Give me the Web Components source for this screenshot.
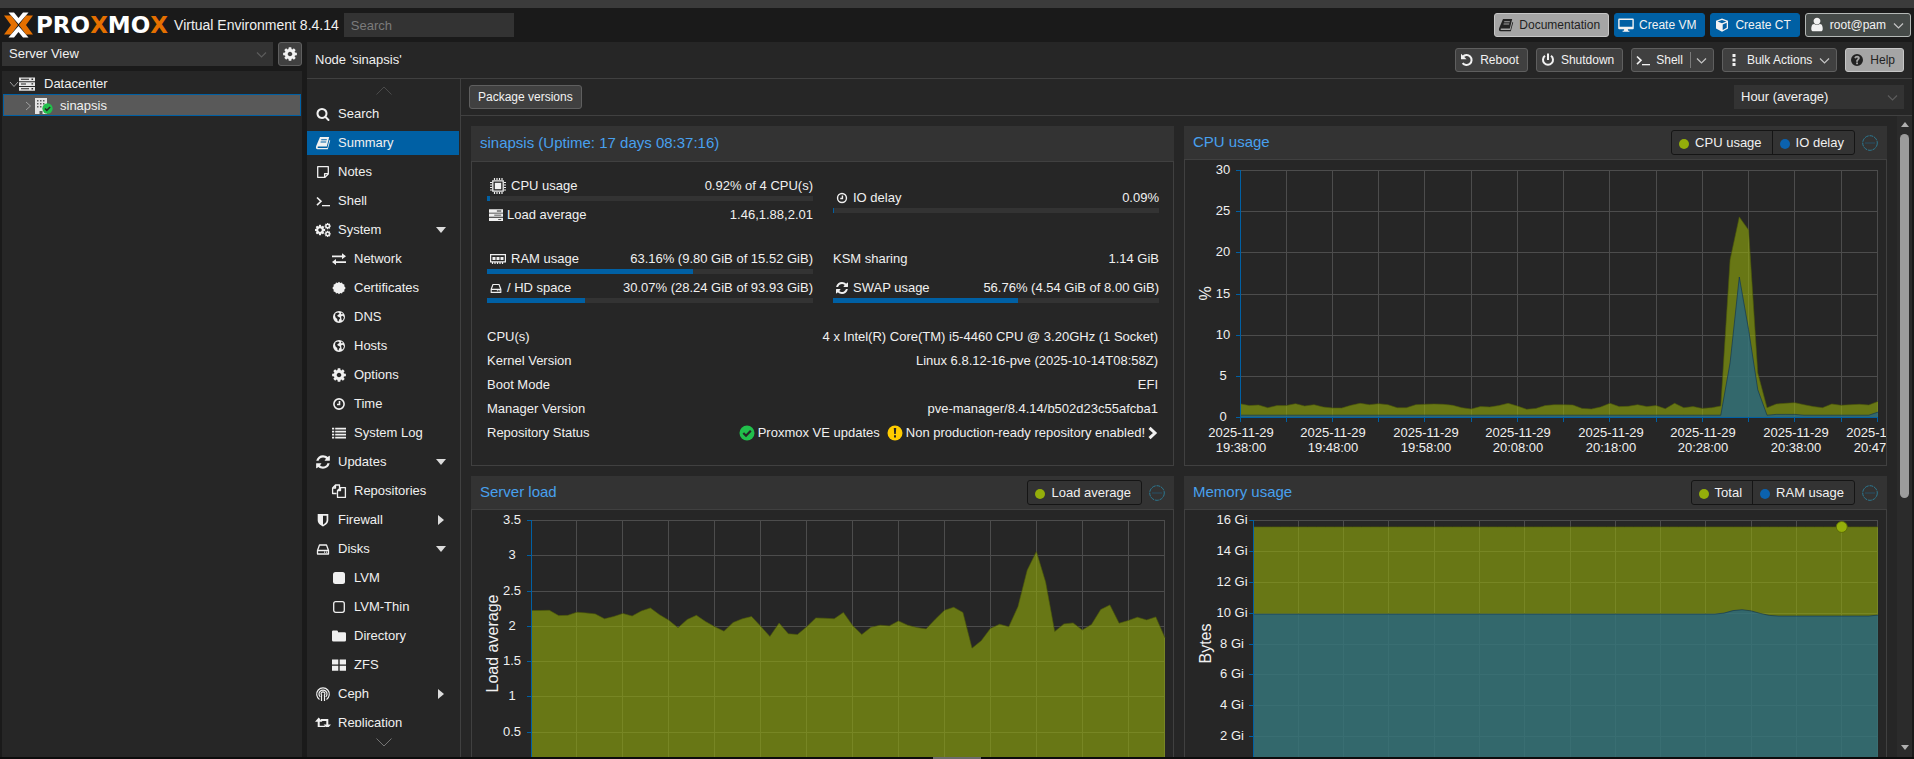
<!DOCTYPE html>
<html lang="en">
<head>
<meta charset="utf-8">
<title>sinapsis - Proxmox Virtual Environment</title>
<style>
  html, body { height: 100%; margin: 0; }
  body {
    background: #1a1a1a; color: #f0f0f0; overflow: hidden;
    font: 13px/16px "Liberation Sans", Arial, sans-serif;
  }
</style>
</head>
<body>
<pve-app></pve-app>

<script>
/* ---------- icons ---------- */
const line = (d, w = 2, extra = "") => `<path d="${d}" fill="none" stroke="currentColor" stroke-width="${w}" ${extra}/>`;
const fill = (d) => `<path d="${d}" fill="currentColor" fill-rule="evenodd"/>`;
const fa = (d) => `<g transform="scale(.00893)">${fill(d)}</g>`;
const COG = "M1152 896q0-106-75-181t-181-75-181 75-75 181 75 181 181 75 181-75 75-181zm512-109v222q0 12-8 23t-20 13l-185 28q-19 54-39 91 35 50 107 138 10 12 10 25t-9 23q-27 37-99 108t-94 71q-12 0-26-9l-138-108q-44 23-91 38-16 136-29 186-7 28-36 28h-222q-14 0-24.5-8.5t-11.5-21.5l-28-184q-49-16-90-37l-141 107q-10 9-25 9-14 0-25-11-126-114-165-168-7-10-7-23 0-12 8-23 15-21 51-66.5t54-70.5q-27-50-41-99l-183-27q-13-2-21-12.5t-8-23.5v-222q0-12 8-23t19-13l186-28q14-46 39-92-40-57-107-138-10-12-10-24 0-10 9-23 26-36 98.5-107.5t94.5-71.5q13 0 26 10l138 107q44-23 91-38 16-136 29-186 7-28 36-28h222q14 0 24.5 8.5t11.5 21.5l28 184q49 16 90 37l142-107q9-9 24-9 13 0 25 10 129 119 165 170 7 8 7 22 0 12-8 23-15 21-51 66.5t-54 70.5q26 50 41 98l183 28q13 2 21 12.5t8 23.5z";
const GLOBE = fill("M8 2a6 6 0 1 0 0 12A6 6 0 0 0 8 2zM4.6 4.2L7 3.4l1.6.8-1 1.4-1.4.8.6 1.2 1.8.6.6 1.4-1.2 1.2-.4 1.8-1-.6-.4-2-1.6-1.4-.6-2.2zM10 7.4l1.8-.6 1.2 1.4-1 2.8-1.2.4-.4-1.8zM10.4 3.6l1.4 1-.8.8-1-.6z");
const HDD = line("M2.5 9.5L4.5 4h7l2 5.5v3.5h-11zM2.5 9.5h11", 1.3, 'stroke-linejoin="round"') + fill("M9 10.6h1.2v1.2H9zM11 10.6h1.2v1.2H11z");
const BOOK = fill("M5 2h9.2L11.8 11.6H3.2c-.9 0-.8 1.5 0 1.5h9.2l2-8.1.8.6-2.4 8.6H2.6C1 14.200.6 12.700 1.200 11zM6.300 4.300l-.2.9h5.600l.2-.9zM5.700 6.500l-.2.9h5.600l.2-.9z");
const ICONS = {
  search: `<g transform="translate(1 1) scale(.00781)">${fill("M1216 832q0-185-131.5-316.5t-316.5-131.5-316.5 131.5-131.5 316.5 131.5 316.5 316.5 131.5 316.5-131.5 131.5-316.5zm512 832q0 52-38 90t-90 38q-54 0-90-38l-343-342q-179 124-399 124-143 0-273.5-55.5t-225-150-150-225-55.5-273.5 55.5-273.5 150-225 225-150 273.5-55.5 273.5 55.5 225 150 150 225 55.5 273.5q0 220-124 399l343 343q37 37 37 90z")}</g>`,
  cog: fa(COG),
  cogs: `<g transform="translate(-1 2) scale(.0067)">${fill(COG)}</g><g transform="translate(9 .4) scale(.0041)">${fill(COG)}</g><g transform="translate(9 8.200) scale(.0041)">${fill(COG)}</g>`,
  refresh: fa("M1639 1056q0 5-1 7-64 268-268 434.5t-478 166.5q-146 0-282.5-55t-243.5-157l-129 129q-19 19-45 19t-45-19-19-45v-448q0-26 19-45t45-19h448q26 0 45 19t19 45-19 45l-137 137q71 66 161 102t187 36q134 0 250-65t186-179q11-17 53-117 8-23 30-23h192q13 0 22.5 9.5t9.5 22.5zm25-800v448q0 26-19 45t-45 19h-448q-26 0-45-19t-19-45 19-45l138-138q-148-137-349-137-134 0-250 65t-186 179q-11 17-53 117-8 23-30 23h-199q-13 0-22.5-9.5t-9.5-22.5v-7q65-268 270-434.5t480-166.5q146 0 284 55.5t245 156.5l130-129q19-19 45-19t45 19 19 45z"),
  user: `<g transform="translate(0 -.5) scale(.00893)">${fill("M1536 1399q0 109-62.500 187t-150.500 78h-854q-88 0-150.500-78t-62.500-187q0-85 8.500-160.500t31.500-152 58.500-131 94-89 134.500-34.500q131 128 313 128t313-128q76 0 134.500 34.500t94 89 58.500 131 31.500 152 8.500 160.500zm-256-887q0 159-112.500 271.500t-271.500 112.500-271.500-112.500-112.500-271.500 112.500-271.500 271.500-112.500 271.500 112.500 112.500 271.500z")}</g>`,
  clock: line("M8 2.900a5.100 5.100 0 1 0 0 10.200A5.100 5.100 0 0 0 8 2.900zM8.500 5v3.500H6", 1.600),
  book: BOOK,
  note: line("M2.700 2.700h10.600v7.300l-3.300 3.300H2.700zM13.300 9.600H9.600v3.700", 1.300, 'stroke-linejoin="round"'),
  terminal: line("M2 4.500l4 3.800-4 3.800", 1.600) + fill("M7 12h8v1.300H7z"),
  exchange: fill("M1 4.500h10V2.200l4 3-4 3V6.200H1zM15 10.200H5V8l-4 3.100 4 3V12h10z"),
  certificate: fill("M8 1.700l1.300 1.200 1.700-.5.7 1.600 1.700.4-.1 1.800 1.400 1.800-1.400 1.700.1 1.800-1.700.4-.7 1.700-1.700-.5L8 14.300l-1.300-1.200-1.700.5-.7-1.700-1.700-.4.1-1.800L1.300 8l1.400-1.800-.1-1.800 1.700-.4.7-1.600 1.700.5z"),
  globe: GLOBE,
  list: fill("M1 2.700h2.200v1.900H1zM4.200 2.700H15v1.900H4.200zM1 5.700h2.200v1.900H1zM4.200 5.700H15v1.900H4.200zM1 8.700h2.200v1.900H1zM4.200 8.700H15v1.900H4.200zM1 11.700h2.200v1.900H1zM4.200 11.700H15v1.900H4.200z"),
  files: line("M5.500 10.500H1.600V5L4.500 2h4v3M4.500 2v3H1.600M6.500 7.500L9.500 4.600h4.900v9.800H6.500zM9.500 4.600v3h-3", 1.300, 'stroke-linejoin="round"'),
  shield: fill("M2.700 2h10.600v6.300c0 3-2.600 4.900-5.300 6.200-2.700-1.300-5.300-3.200-5.300-6.200zM8 3.700v9c2-1.100 3.600-2.500 3.600-4.600V3.700z"),
  hdd: HDD,
  square: `<rect x="2" y="2" width="12" height="12" rx="2.500" fill="currentColor"/>`,
  "square-o": `<rect x="2.700" y="2.700" width="10.600" height="10.600" rx="2" fill="none" stroke="currentColor" stroke-width="1.300"/>`,
  folder: fill("M1 3.600Q1 2.500 2.200 2.500h3.600Q7 2.500 7 3.800v.5h6.500q1.500 0 1.500 1.300v6.600q0 1.300-1.500 1.300h-11Q1 13.500 1 12.200z"),
  grid: fill("M1 2.500h6.300v5H1zM8.700 2.500H15v5H8.700zM1 8.700h6.300v5H1zM8.700 8.700H15v5H8.700z"),
  ceph: line("M4.500 13.400A6.300 6.300 0 1 1 11.500 13.400M5.200 10.900A4 4 0 1 1 10.800 10.900M7.200 9.500A1.900 1.900 0 1 1 8.800 9.500M6.500 9.500v5.500M9.500 9.500v5.500", 1.200),
  retweet: line("M3.700 6v5.700h6.500M12.300 10.500V5H6", 2) + fill("M3.700 2.500l3.700 4.300H0zM12.300 13.700L8.600 9.400H16z"),
  undo: line("M3.800 4.800A5 5 0 1 1 3.600 11.100", 2) + fill("M2 1.700v5.600h5.600z"),
  power: line("M5 3.800a5 5 0 1 0 6 0M8 1.500v6.500", 2),
  ellipsis: fill("M6.500 2h3v3h-3zM6.500 6.500h3v3h-3zM6.500 11h3v3h-3z"),
  help: fill("M8 2a6 6 0 1 0 0 12A6 6 0 0 0 8 2zM7.100 10.600h1.900v1.700H7.100zM5.300 6C5.700 4.500 6.700 3.800 8.100 3.800c1.500 0 2.700.9 2.700 2.200 0 1.700-1.800 1.900-1.800 3.300v.4H7.100v-.5c0-1.700 1.600-2 1.600-3 0-.9-1.400-.9-1.700.3z"),
  desktop: fill("M1.200 1.500h13.600q1 0 1 1v8.700q0 1-1 1h-5l.4 1.500h1.200v1H4.600v-1h1.200l.4-1.500h-5q-1 0-1-1V2.500q0-1 1-1zM1.600 2.900v6.900h12.800V2.900z"),
  cube: fill("M8 1.500l6 2.300v7.600L8 14.700 2 11.400V3.800zM8 2.900L3.600 4.500 8 6.200l4.400-1.700zM8.700 7.400v5.500l4-2.200V5.800z"),
  down: line("M4 6.500l4.500 4.500L13 6.500", 1.200),
  server: fill("M0 1.500h16v3.700H0zM0 6.200h16v3.700H0zM0 11h16v3.700H0zM2 2.800v1h8v-1zM2 7.500v1h5v-1zM2 12.300v1h8v-1zM12.500 2.600v1.300h1.600V2.600zM12.500 7.300v1.300h1.600V7.300zM12.500 12.100v1.300h1.600v-1.300z"),
  load: fill("M0 1.500h16v3.800H0zM0 6.300h16v3.800H0zM0 11.100h16v3.800H0zM9 2.900v1h5v-1zM6 7.700v1h8v-1zM10.500 12.500v1h3.500v-1z"),
  building: fill("M2 0h12v16H9.500v-3h-3v3H2zM4 2v1.500h1.500V2zM7 2v1.500h1.500V2zM10 2v1.500h1.500V2zM4 5v1.500h1.500V5zM7 5v1.500h1.500V5zM10 5v1.500h1.500V5zM4 8v1.500h1.500V8zM7 8v1.500h1.500V8zM10 8v1.500h1.500V8z"),
  ok: `<circle cx="8" cy="8" r="7.500" fill="#21bf4b"/><path d="M4.300 8l2.700 2.700 4.800-5" fill="none" stroke="#262626" stroke-width="2.200"/>`,
  warn: `<circle cx="8" cy="8" r="7.500" fill="#fc0"/><path d="M6.800 3h2.400l-.4 6H7.200zM7 10.300h2v2.300H7z" fill="#262626"/>`,
  next: line("M4.500 2.800L10 8l-5.500 5.200", 3),
  cpu: line("M2.800 2.800h10.400v10.400H2.800z", 1.300) + fill("M4.800 4.800h6.400v6.400H4.800z") + line("M4.500 0v2M7 0v2M9.500 0v2M12 0v2M4.500 14v2M7 14v2M9.500 14v2M12 14v2M0 4.500h2M0 7h2M0 9.500h2M0 12h2M14 4.500h2M14 7h2M14 9.500h2M14 12h2", 1.200),
  ram: line("M.6 3.600h14.800v7.300H.6z", 1.200) + fill("M2.500 6h3v3h-3zM6.500 6h3v3h-3zM10.500 6h3v3h-3z") + line("M2.500 11v2M5 11v2M7.500 11v2M10 11v2M12.500 11v2", 1.200),
  collapse: `<circle cx="8" cy="8" r="7.300" fill="none" stroke="#2c7891" stroke-dasharray="4 .8"/><path d="M3 8h10" stroke="#275066"/>`
};

/* ---------- base ---------- */
class PveElement extends HTMLElement {
  connectedCallback() {
    if (this.shadowRoot) return;
    const root = this.attachShadow({ mode: "open" });
    root.innerHTML = `<style>*{box-sizing:border-box}${this.css()}</style>${this.html()}`;
    this.ready(root);
  }
  attr(name, fallback = "") { return this.getAttribute(name) ?? fallback; }
  css() { return ""; }
  html() { return "<slot></slot>"; }
  ready() {}
}

class PveIcon extends PveElement {
  css() { return `:host{display:block;width:16px;height:16px;flex:none}svg{display:block;width:100%;height:100%}`; }
  html() { return `<svg viewBox="0 0 16 16" aria-hidden="true">${ICONS[this.attr("name")] || ""}</svg>`; }
}

class PveButton extends PveElement {
  css() { return `
    :host{display:block;flex:none}
    button{display:flex;align-items:center;height:24px;padding:0 8px;border:1px solid #5f5f5f;border-radius:3px;
      background:#404040;color:#f2f2f2;font:12px/16px "Liberation Sans",Arial,sans-serif;white-space:nowrap;cursor:pointer}
    .lead{margin:0 5px 0 -5px}
    :host([menu]) button{padding-right:4px}
    .arrow{margin-left:4px;color:#c4c4c4}
    .split{width:1px;height:16px;margin:0 -2px 0 7px;background:#7a7a7a}
    :host([kind=primary]) button{background:#0060a4;border-color:#0060a4}
    :host([kind=light]) button{background:#a5a5a5;border-color:#c6c6c6;color:#222}
    :host([kind=user]) button{background:#454a48;border-color:#b4b8b6}
    :host([kind=square]) button{width:24px;padding:0 3px}
    :host([kind=square]) .lead{margin:0}`; }
  html() {
    const icon = this.attr("icon");
    const label = this.attr("label");
    return `<button type="button"${label ? ` aria-label="${label}"` : ""}>
      ${icon ? `<pve-icon class="lead" name="${icon}"></pve-icon>` : ""}<slot></slot>
      ${this.hasAttribute("split") ? `<span class="split"></span>` : ""}
      ${this.hasAttribute("menu") ? `<pve-icon class="arrow" name="down"></pve-icon>` : ""}</button>`;
  }
}

class PveCombo extends PveElement {
  css() { return `
    :host{display:grid;align-items:center;height:24px;background:#333}
    select,pve-icon{grid-area:1/1}
    select{appearance:none;width:100%;height:24px;padding:0 7px;border:0;border-radius:0;background:none;color:#f0f0f0;
      font:13px/16px "Liberation Sans",Arial,sans-serif}
    pve-icon{justify-self:end;margin-right:4px;color:#5c5c5c;pointer-events:none}`; }
  html() { return `<select aria-label="${this.attr("label")}"><option>${this.attr("value")}</option></select><pve-icon name="down"></pve-icon>`; }
}

class PveLogo extends PveElement {
  css() { return `
    :host{display:flex;align-items:center;height:24px;gap:3px}
    svg{width:29px;height:26px;flex:none}
    .word{font:bold 23px/24px "DejaVu Sans",sans-serif;color:#fff}
    b{color:#e57000}`; }
  html() { return `<svg viewBox="0 0 29 26" aria-hidden="true">
      <path d="M0 3.500h7L14 13l-7 9.500H0L7 13zM29 3.500h-7L15 13l7 9.500h7L22 13z" fill="#e57000"/>
      <path d="M4.500.5H10l4.500 5.500L19 .5h5.500l-10 11.500zM4.500 25.500H10l4.500-5.500 4.500 5.500h5.500l-10-11.500z" fill="#fff"/></svg>
    <span class="word">PRO<b>X</b>MO<b>X</b></span>`; }
}

class PveHeader extends PveElement {
  css() { return `
    :host{display:flex;align-items:center;height:42px;padding:0 3px 0 4px;border-top:8px solid #3b3b3b;gap:5px}
    .version{font-size:14px;margin-left:1px;white-space:nowrap}
    input{width:170px;height:24px;padding:0 7px;border:0;background:#333;color:#f0f0f0;font:13px/16px "Liberation Sans",Arial,sans-serif}
    input::placeholder{color:#7b7b7b;opacity:1}
    .gap{flex:1}`; }
  html() { return `
    <pve-logo></pve-logo><span class="version">Virtual Environment 8.4.14</span>
    <input type="search" placeholder="Search" aria-label="Search"><span class="gap"></span>
    <pve-button kind="light" icon="book">Documentation</pve-button>
    <pve-button kind="primary" icon="desktop">Create VM</pve-button>
    <pve-button kind="primary" icon="cube">Create CT</pve-button>
    <pve-button kind="user" icon="user" menu>root@pam</pve-button>`; }
}

class PveTree extends PveElement {
  css() { return `
    :host{display:flex;flex-direction:column;gap:5px;width:300px;flex:none}
    .bar{display:flex;gap:5px}
    pve-combo{flex:1}
    .tree{flex:1;padding:1px;background:#262626}
    ul{list-style:none;margin:0;padding:0}
    .row{display:flex;align-items:center;height:22px;padding:2px 0 0 5px;border:1px solid transparent}
    .row svg{width:10px;height:10px;flex:none;fill:none;stroke:#a0a0a0}
    .row .ico{position:relative;color:#e4e4e4;margin-right:9px}
    .child{padding-left:19px;background:#595959;border-color:#0060a4}
    .child .ico{margin-right:11px}
    .child .badge{position:absolute;left:9px;top:5px;width:11px;height:11px}`; }
  html() { return `
    <div class="bar"><pve-combo label="View" value="Server View"></pve-combo><pve-button kind="square" icon="cog" label="View settings"></pve-button></div>
    <div class="tree"><ul role="tree">
      <li role="treeitem"><div class="row"><svg viewBox="0 0 10 10"><path d="M1 3l4 4.500L9 3"/></svg><span class="ico"><pve-icon name="server"></pve-icon></span>Datacenter</div></li>
      <li role="treeitem"><div class="row child"><svg viewBox="0 0 10 10"><path d="M3 1l4.500 4L3 9"/></svg><span class="ico"><pve-icon name="building"></pve-icon><pve-icon class="badge" name="ok"></pve-icon></span>sinapsis</div></li>
    </ul></div>`; }
}

class PveNavItem extends PveElement {
  css() { return `
    :host{display:block}
    a{display:flex;align-items:center;height:24px;padding:0 12px 0 8px;color:#f0f0f0;text-decoration:none}
    .icon{margin-right:7px}
    :host([sub]) a{padding-left:24px}
    :host([selected]) a{background:#0060a4}
    .text{flex:1}
    .tri{width:12px;height:10px;fill:#dcdcdc}`; }
  html() {
    const tri = { open: "M1 2h10L6 8z", closed: "M3 0l6 5-6 5z" }[this.attr("group")];
    return `<a href="#"><pve-icon class="icon" name="${this.attr("icon")}"></pve-icon><span class="text"><slot></slot></span>
      ${tri ? `<svg class="tri" viewBox="0 0 12 10" aria-hidden="true"><path d="${tri}"/></svg>` : ""}</a>`;
  }
}

class PveNav extends PveElement {
  css() { return `
    :host{display:flex;flex-direction:column;width:154px;flex:none;border-right:1px solid #404040}
    .scroll{display:flex;justify-content:center;flex:none;height:23px;align-items:center}
    .scroll.end{height:30px}
    .scroll svg{width:16px;height:9px;fill:none;stroke:#4a4a4a}
    .scroll.end svg{stroke:#757575}
    nav{display:flex;flex-direction:column;gap:5px;flex:1;min-height:0;overflow:hidden;margin-right:1px}`; }
  html() {
    const items = [
      ["Search", "search"], ["Summary", "book", "selected"], ["Notes", "note"], ["Shell", "terminal"],
      ["System", "cogs", 'group="open"'], ["Network", "exchange", "sub"], ["Certificates", "certificate", "sub"],
      ["DNS", "globe", "sub"], ["Hosts", "globe", "sub"], ["Options", "cog", "sub"], ["Time", "clock", "sub"],
      ["System Log", "list", "sub"], ["Updates", "refresh", 'group="open"'], ["Repositories", "files", "sub"],
      ["Firewall", "shield", 'group="closed"'], ["Disks", "hdd", 'group="open"'], ["LVM", "square", "sub"],
      ["LVM-Thin", "square-o", "sub"], ["Directory", "folder", "sub"], ["ZFS", "grid", "sub"],
      ["Ceph", "ceph", 'group="closed"'], ["Replication", "retweet"]
    ];
    return `<div class="scroll"><svg viewBox="0 0 16 9"><path d="M.5 8.500L8 1l7.500 7.500"/></svg></div>
      <nav aria-label="Node">${items.map(([t, i, a = ""]) => `<pve-nav-item icon="${i}" ${a}>${t}</pve-nav-item>`).join("")}</nav>
      <div class="scroll end"><svg viewBox="0 0 16 9"><path d="M.5.5L8 8 15.500.5"/></svg></div>`;
  }
}

class PvePanel extends PveElement {
  css() { return `
    :host{display:flex;flex-direction:column;min-width:0;border:1px solid #404040;border-top:0}
    header{display:flex;align-items:center;gap:7px;height:34px;margin:0 -1px;padding:0 9px;background:#333;border-bottom:1px solid #404040}
    :host([tall]) header{height:36px}
    h2{flex:1;margin:0 0 2px;font-size:15px;line-height:18px;font-weight:normal;color:#48a0ee}`; }
  html() { return `<header><h2>${this.attr("heading")}</h2><slot name="tools"></slot></header><slot></slot>`; }
}

class PveLegend extends PveElement {
  css() { return `
    :host{display:flex;border:1px solid #151515;border-radius:3px;height:25px}
    span{display:flex;align-items:center;gap:6px;padding:0 10px 0 7px}
    span+span{border-left:1px solid #151515}
    i{width:10px;height:10px;margin-top:3px;border-radius:50%;background:#94ae0a}
    span+span i{background:#0b62ae}`; }
  html() { return this.attr("items").split(",").map(t => `<span><i></i>${t}</span>`).join(""); }
}

class PveUsage extends PveElement {
  css() { return `
    :host{display:block}
    .line{display:flex;height:16px;line-height:16px;white-space:nowrap}
    .value{margin-left:auto}
    .icon{width:14px;height:14px;margin:1px 4px 0 2px}
    .wide{margin:0 5px 0 3px}
    .track{height:5px;margin-top:2px;background:#333}
    .track i{display:block;height:5px;background:#0060a4}`; }
  html() {
    const icon = this.attr("icon"), pct = this.getAttribute("percent");
    return `<div class="line">${icon ? `<pve-icon class="${icon === "cpu" || icon === "ram" ? "wide" : "icon"}" name="${icon}"></pve-icon>` : ""}
      <span>${this.attr("label")}</span><span class="value">${this.attr("value")}</span></div>
      ${pct === null ? "" : `<div class="track"><i style="width:${pct}%"></i></div>`}`;
  }
}

class PveStatus extends PveElement {
  css() { return `
    :host{display:block;padding:16px 14px 18px 15px}
    .group{display:grid;grid-template-columns:1fr 1fr;column-gap:20px;margin-bottom:21px}
    .col{display:flex;flex-direction:column;gap:6px;min-height:52px}
    .col pve-usage{min-height:23px}
    .col.mid{padding-top:12px}
    dl{margin:22px 0 0;line-height:24px}
    dl div{display:flex;justify-content:space-between;padding-right:1px}
    dd{margin:0;display:flex;align-items:center;gap:3px;white-space:nowrap}
    .second{margin-left:4px}
    .next{margin:0 -3px}`; }
  html() { return `
    <div class="group">
      <div class="col">
        <pve-usage icon="cpu" label="CPU usage" value="0.92% of 4 CPU(s)" percent="1"></pve-usage>
        <pve-usage icon="load" label="Load average" value="1.46,1.88,2.01"></pve-usage>
      </div>
      <div class="col mid"><pve-usage icon="clock" label="IO delay" value="0.09%" percent="0.3"></pve-usage></div>
    </div>
    <div class="group">
      <div class="col">
        <pve-usage icon="ram" label="RAM usage" value="63.16% (9.80 GiB of 15.52 GiB)" percent="63.16"></pve-usage>
        <pve-usage icon="hdd" label="/ HD space" value="30.07% (28.24 GiB of 93.93 GiB)" percent="30.07"></pve-usage>
      </div>
      <div class="col">
        <pve-usage label="KSM sharing" value="1.14 GiB"></pve-usage>
        <pve-usage icon="refresh" label="SWAP usage" value="56.76% (4.54 GiB of 8.00 GiB)" percent="56.76"></pve-usage>
      </div>
    </div>
    <dl>
      <div><dt>CPU(s)</dt><dd>4 x Intel(R) Core(TM) i5-4460 CPU @ 3.20GHz (1 Socket)</dd></div>
      <div><dt>Kernel Version</dt><dd>Linux 6.8.12-16-pve (2025-10-14T08:58Z)</dd></div>
      <div><dt>Boot Mode</dt><dd>EFI</dd></div>
      <div><dt>Manager Version</dt><dd>pve-manager/8.4.14/b502d23c55afcba1</dd></div>
      <div><dt>Repository Status</dt><dd><pve-icon name="ok"></pve-icon><span>Proxmox VE updates</span>
        <pve-icon class="second" name="warn"></pve-icon><span>Non production-ready repository enabled!</span><pve-icon class="next" name="next"></pve-icon></dd></div>
    </dl>`; }
}

/* ---------- charts: one sample per minute, 19:38 to 20:47 ---------- */
const flat = (n, v) => Array(n).fill(v);
const CHARTS = {
  cpu: {
    unit: "%", left: 55, labelX: 38, max: 30, step: 5, label: v => v, times: true,
    series: [
      [1.62,1.38,1.46,1.13,1.38,1.38,1.62,1.34,1.5,1.21,1.09,1.09,1.42,1.66,1.5,1.62,1.5,1.13,1.13,1.5,1.54,1.58,1.54,1.42,1.13,.97,1.26,1.21,1.38,1.66,1.34,.93,1.05,1.38,1.5,1.5,1.46,1.05,.97,1.21,1.66,1.26,1.3,1.5,1.26,1.38,1.01,1.66,1.13,1.26,1.05,1.13,1.34,19.1,24.3,22.7,5.34,1.13,1.58,1.66,1.74,1.5,1.26,1.13,1.58,1.42,1.5,1.54,1.46,1.9],
      [...flat(53, .22),6.6,17,10.6,3.3,.22,.32,.32,.32,...flat(8, .22),.6]
    ]
  },
  load: {
    unit: "Load average", left: 59, labelX: 40, max: 3.5, step: .5, label: v => v,
    series: [
      [2.217,2.217,2.22,2.146,2.15,2.193,2.184,2.17,2.1,2.132,2.175,2.14,2.21,2.255,2.156,2.08,1.972,2.09,2.15,2.06,1.986,1.925,2.047,2.1,2.132,1.995,1.85,2.04,1.887,1.877,1.986,2.113,2.108,2.1,2.19,2.005,1.877,1.98,2.01,2,2.07,2.01,1.976,1.957,2.094,2.22,2.264,2.19,1.684,1.788,1.962,2.024,1.986,2.274,2.788,3.052,2.623,1.92,2.028,2.042,1.94,2.02,2.23,2.297,2.038,2.075,2.123,2.085,2.127,1.83]
    ]
  },
  memory: {
    unit: "Bytes", left: 68, labelX: 47, max: 16, step: 2, label: v => v + " Gi", marker: 65,
    series: [flat(70, 15.55), [...flat(52, 9.91),9.97,10.13,10.19,10.11,9.95,9.82,...flat(11, 9.78),9.84]]
  }
};
const COLOURS = [["#94ae0a", "#4c5a06"], ["#115fa6", "#0a2f55"]];

class PveChart extends PveElement {
  css() { return `
    :host{display:block;height:305px}
    svg{display:block;width:100%;height:305px}
    text{fill:#f0f0f0;font:13px "Liberation Sans",Arial,sans-serif;text-anchor:middle}
    .unit{font-size:16px}`; }
  html() { return `<svg role="img" aria-label="${this.attr("kind")} chart"></svg>`; }
  ready(root) {
    const svg = root.querySelector("svg");
    new ResizeObserver(() => this.draw(svg)).observe(this);
  }
  draw(svg) {
    const c = CHARTS[this.attr("kind")], top = 10, height = 247;
    const width = this.clientWidth - 8 - c.left, right = c.left + width, bottom = top + height;
    const x = m => c.left + width * m / 69;
    const y = v => bottom - height * v / c.max;
    const snapY = v => Math.round(v) + .5;
    const snapX = v => Math.max(c.left, Math.ceil(v) - 1) + .5;
    let grid = "", ticks = "", labels = "";
    for (let v = 0; v <= c.max; v += c.step) {
      if (v) grid += `M${c.left} ${snapY(y(v))}H${right}`;
      ticks += `M${c.left - 4} ${snapY(y(v))}h4`;
      labels += `<text x="${c.labelX}" y="${Math.round(y(v)) + 4}">${c.label(v)}</text>`;
    }
    const minutes = [];
    for (let m = 0; m < 69; m += 5) minutes.push(m);
    minutes.push(69);
    for (const m of minutes) {
      grid += `M${snapX(x(m))} ${top}V${bottom}`;
      ticks += `M${snapX(x(m))} ${bottom}v5`;
      if (c.times && (m % 10 === 0 || m === 69)) {
        const t = 38 + m, clock = `${19 + Math.floor(t / 60)}:${String(t % 60).padStart(2, "0")}:00`;
        const cx = Math.round(x(m)) + 1;
        labels += `<text x="${cx}" y="277">2025-11-29</text><text x="${cx}" y="292">${clock}</text>`;
      }
    }
    const areas = c.series.map((s, i) => {
      const pts = s.map((v, m) => `${x(m).toFixed(1)} ${y(v).toFixed(1)}`).join("L");
      return `<path d="M${c.left} ${bottom}L${pts}V${bottom}z" fill="${COLOURS[i][0]}" fill-opacity=".6"/>
        <path d="M${pts}" fill="none" stroke="${COLOURS[i][1]}" stroke-opacity=".6"/>`;
    }).join("");
    const mid = top + height / 2;
    svg.innerHTML = `<path d="${grid}" stroke="#4c4c4c"/>${areas}
      <path d="M${c.left + .5} ${top}V${bottom + .5}H${right}${ticks}" fill="none" stroke="#0060a4"/>
      ${c.marker ? `<circle cx="${x(c.marker)}" cy="${y(c.series[0][0])}" r="5.500" fill="#94ae0a" stroke="#5d6d08"/>` : ""}
      ${labels}<text class="unit" transform="translate(26 ${mid}) rotate(-90)">${c.unit}</text>`;
  }
}

class PveScrollbar extends PveElement {
  css() { return `
    :host{display:flex;flex-direction:column;align-items:center;gap:4px;width:15px;flex:none;padding:6px 0 7px;background:#2b2b2b}
    i{border:4px solid transparent;width:0;height:0;flex:none}
    .up{border-bottom:5px solid #b0b0b0;border-top:0;margin-bottom:3px}
    .down{border-top:5px solid #b0b0b0;border-bottom:0}
    .track{flex:1;width:9px}
    .thumb{height:60%;border-radius:5px;background:#9c9c9c}`; }
  html() { return `<i class="up"></i><div class="track"><div class="thumb"></div></div><i class="down"></i>`; }
}

class PveNode extends PveElement {
  css() { return `
    :host{display:flex;flex-direction:column;flex:1;min-width:0;background:#262626}
    .title{display:flex;align-items:center;gap:8px;height:37px;flex:none;padding:0 8px;border-bottom:1px solid #404040}
    h1{flex:1;margin:0;font-size:13px;line-height:16px;font-weight:normal}
    .main{display:flex;flex:1;min-height:0}
    .content{display:flex;flex-direction:column;flex:1;min-width:0}
    .tools{display:flex;align-items:center;justify-content:space-between;height:37px;flex:none;padding:0 8px;border-bottom:1px solid #404040}
    .tools pve-combo{width:170px}
    .view{display:flex;flex:1;min-height:0}
    .panels{display:grid;grid-template-columns:1fr 1fr;gap:10px;align-content:start;flex:1;min-width:0;padding:10px;overflow:auto;scrollbar-width:none}`; }
  html() {
    const chart = (heading, legend, kind) => `<pve-panel heading="${heading}"><pve-legend slot="tools" items="${legend}"></pve-legend>
      <pve-icon slot="tools" name="collapse"></pve-icon><pve-chart kind="${kind}"></pve-chart></pve-panel>`;
    return `
    <div class="title"><h1>Node 'sinapsis'</h1>
      <pve-button icon="undo">Reboot</pve-button><pve-button icon="power">Shutdown</pve-button>
      <pve-button icon="terminal" split menu>Shell</pve-button><pve-button icon="ellipsis" menu>Bulk Actions</pve-button>
      <pve-button kind="light" icon="help">Help</pve-button></div>
    <div class="main"><pve-nav></pve-nav>
      <div class="content">
        <div class="tools"><pve-button>Package versions</pve-button><pve-combo label="Time range" value="Hour (average)"></pve-combo></div>
        <div class="view"><div class="panels">
          <pve-panel tall heading="sinapsis (Uptime: 17 days 08:37:16)"><pve-status></pve-status></pve-panel>
          ${chart("CPU usage", "CPU usage,IO delay", "cpu")}
          ${chart("Server load", "Load average", "load")}
          ${chart("Memory usage", "Total,RAM usage", "memory")}
        </div><pve-scrollbar></pve-scrollbar></div>
      </div></div>`;
  }
}

class PveApp extends PveElement {
  css() { return `
    :host{display:flex;flex-direction:column;height:100vh}
    .work{display:flex;gap:5px;flex:1;min-height:0;padding:0 2px}
    footer{display:flex;justify-content:center;height:2px;flex:none;background:#0c0c0c}
    footer i{width:48px;background:#6b6b6b}`; }
  html() { return `<pve-header></pve-header><div class="work"><pve-tree></pve-tree><pve-node></pve-node></div><footer><i></i></footer>`; }
}

for (const [name, cls] of Object.entries({
  "pve-icon": PveIcon, "pve-button": PveButton, "pve-combo": PveCombo, "pve-logo": PveLogo, "pve-header": PveHeader,
  "pve-tree": PveTree, "pve-nav-item": PveNavItem, "pve-nav": PveNav, "pve-panel": PvePanel, "pve-legend": PveLegend,
  "pve-usage": PveUsage, "pve-status": PveStatus, "pve-chart": PveChart, "pve-scrollbar": PveScrollbar,
  "pve-node": PveNode, "pve-app": PveApp
})) customElements.define(name, cls);
</script>
</body>
</html>
